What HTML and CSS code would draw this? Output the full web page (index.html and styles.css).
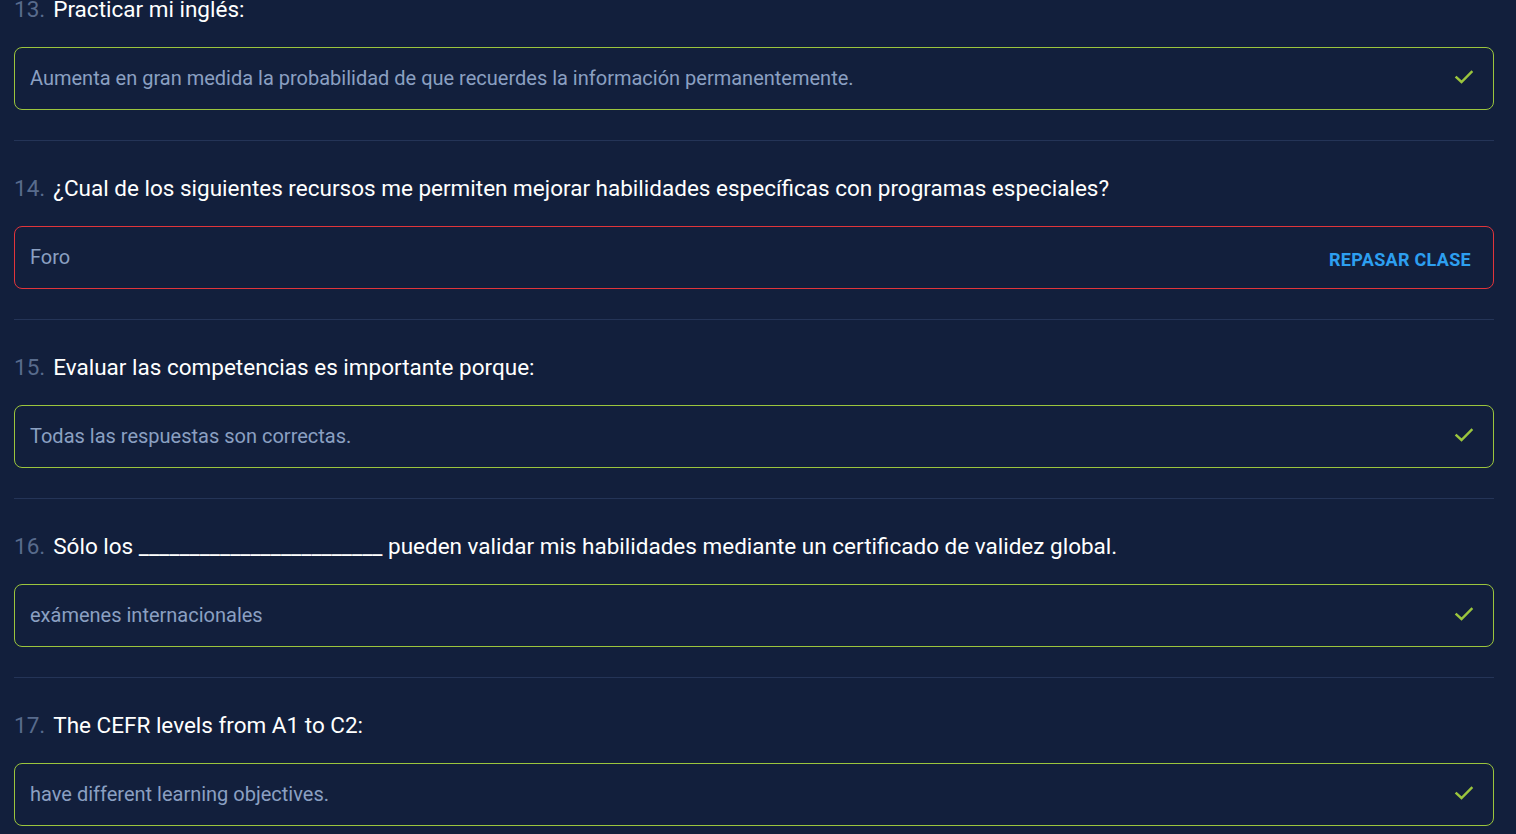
FILE: index.html
```html
<!DOCTYPE html>
<html lang="es">
<head>
<meta charset="utf-8">
<title>Resultados</title>
<link rel="stylesheet" href="styles.css">
</head>
<body>
<main class="quiz">
  <section class="question">
    <h2 class="q-title"><span class="q-num">13.</span><span class="q-text">Practicar mi inglés:</span></h2>
    <div class="answer correct">
      <span class="answer-text">Aumenta en gran medida la probabilidad de que recuerdes la información permanentemente.</span>
      <svg class="check" viewBox="0 0 24 24" width="24" height="24"><path d="M4.5 12.5l5 4.5L19.5 7" fill="none" stroke="#9bc53d" stroke-width="2.4" stroke-linecap="square"/></svg>
    </div>
  </section>
  <section class="question">
    <h2 class="q-title"><span class="q-num">14.</span><span class="q-text">¿Cual de los siguientes recursos me permiten mejorar habilidades específicas con programas especiales?</span></h2>
    <div class="answer wrong">
      <span class="answer-text">Foro</span>
      <a class="review" href="#">REPASAR CLASE</a>
    </div>
  </section>
  <section class="question">
    <h2 class="q-title"><span class="q-num">15.</span><span class="q-text">Evaluar las competencias es importante porque:</span></h2>
    <div class="answer correct">
      <span class="answer-text">Todas las respuestas son correctas.</span>
      <svg class="check" viewBox="0 0 24 24" width="24" height="24"><path d="M4.5 12.5l5 4.5L19.5 7" fill="none" stroke="#9bc53d" stroke-width="2.4" stroke-linecap="square"/></svg>
    </div>
  </section>
  <section class="question">
    <h2 class="q-title"><span class="q-num">16.</span><span class="q-text">Sólo los ________________________ pueden validar mis habilidades mediante un certificado de validez global.</span></h2>
    <div class="answer correct">
      <span class="answer-text">exámenes internacionales</span>
      <svg class="check" viewBox="0 0 24 24" width="24" height="24"><path d="M4.5 12.5l5 4.5L19.5 7" fill="none" stroke="#9bc53d" stroke-width="2.4" stroke-linecap="square"/></svg>
    </div>
  </section>
  <section class="question">
    <h2 class="q-title"><span class="q-num">17.</span><span class="q-text">The CEFR levels from A1 to C2:</span></h2>
    <div class="answer correct">
      <span class="answer-text">have different learning objectives.</span>
      <svg class="check" viewBox="0 0 24 24" width="24" height="24"><path d="M4.5 12.5l5 4.5L19.5 7" fill="none" stroke="#9bc53d" stroke-width="2.4" stroke-linecap="square"/></svg>
    </div>
  </section>
</main>
</body>
</html>
```
FILE: styles.css
```css
html, body {
  margin: 0;
  padding: 0;
  background: #121f3c;
  overflow: hidden;
}
body {
  font-family: Roboto, "Liberation Sans", sans-serif;
  height: 834px;
}
.quiz {
  width: 1480px;
  padding-left: 14px;
  margin-top: -39px;
}
.question {
  border-top: 1px solid #243457;
  padding-top: 31px;
  padding-bottom: 30px;
}
.q-title {
  margin: 0 0 22px 0;
  font-size: 22.5px;
  line-height: 32px;
  font-weight: 400;
  color: #ffffff;
  display: flex;
  align-items: baseline;
}
.q-num {
  color: #586b8c;
  font-weight: 400;
  margin-right: 8px;
}
.answer {
  height: 61px;
  border: 1px solid #9bc53d;
  border-radius: 8px;
  display: flex;
  align-items: center;
  justify-content: space-between;
  padding: 0 17px 0 15px;
}
.answer.wrong {
  border-color: #e0353b;
  padding-right: 22px;
}
.answer-text {
  font-size: 20px;
  color: #8ba0c2;
  line-height: 24px;
  margin-top: -2px;
}
.check {
  width: 24px;
  height: 24px;
  margin-top: -4px;
}
.review {
  font-size: 18px;
  font-weight: 700;
  color: #2d9ff0;
  text-decoration: none;
  letter-spacing: 0.3px;
  margin-top: 3px;
}
```
